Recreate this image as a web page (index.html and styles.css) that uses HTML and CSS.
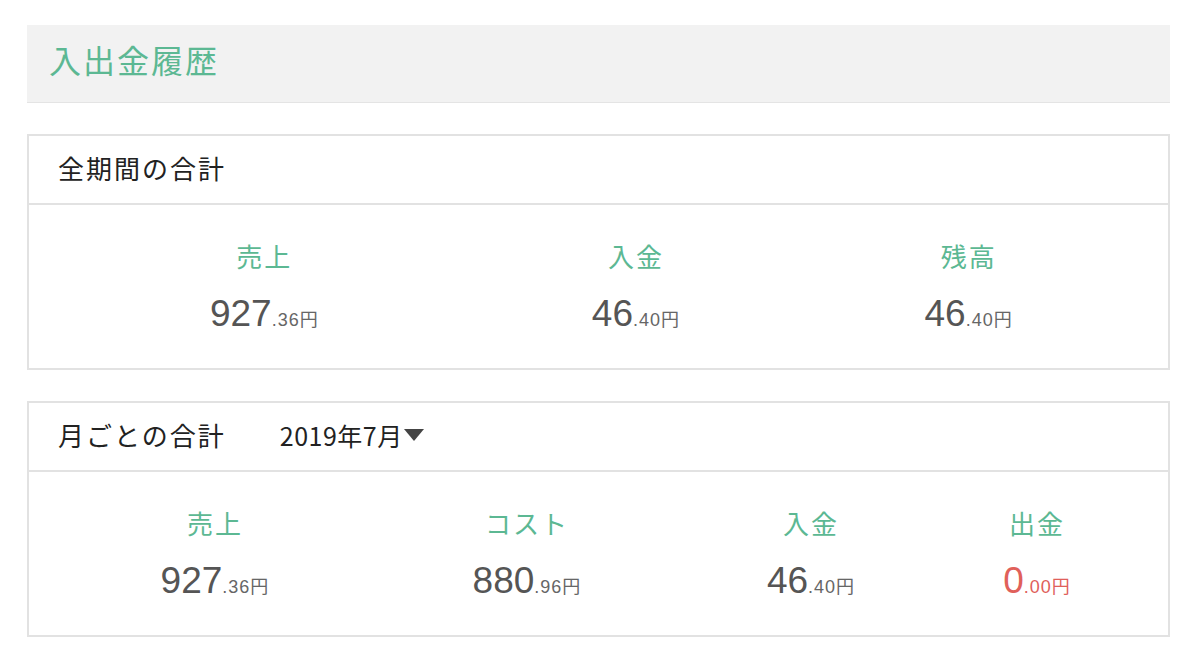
FILE: index.html
```html
<!DOCTYPE html>
<html lang="ja">
<head>
<meta charset="utf-8">
<title>入出金履歴</title>
<link rel="stylesheet" href="styles.css">
</head>
<body>
<div class="page">

    <div class="page-head">
        <h1 class="page-title">入出金履歴</h1>
    </div>

    <section class="card">
        <div class="card-head">
            <h2 class="card-title">全期間の合計</h2>
        </div>
        <div class="card-body cols-3">
            <div class="stat">
                <div class="stat-label">売上</div>
                <div class="stat-value">927<span class="stat-dec">.36円</span></div>
            </div>
            <div class="stat">
                <div class="stat-label">入金</div>
                <div class="stat-value">46<span class="stat-dec">.40円</span></div>
            </div>
            <div class="stat">
                <div class="stat-label">残高</div>
                <div class="stat-value">46<span class="stat-dec">.40円</span></div>
            </div>
        </div>
    </section>

    <section class="card">
        <div class="card-head">
            <h2 class="card-title">月ごとの合計</h2>
            <div class="month-select">
                <span>2019年7月</span>
                <svg class="caret" viewBox="0 0 20 12" width="20" height="12"><polygon points="0,0 20,0 10,12" fill="currentColor"/></svg>
            </div>
        </div>
        <div class="card-body cols-4">
            <div class="stat">
                <div class="stat-label">売上</div>
                <div class="stat-value">927<span class="stat-dec">.36円</span></div>
            </div>
            <div class="stat">
                <div class="stat-label">コスト</div>
                <div class="stat-value">880<span class="stat-dec">.96円</span></div>
            </div>
            <div class="stat">
                <div class="stat-label">入金</div>
                <div class="stat-value">46<span class="stat-dec">.40円</span></div>
            </div>
            <div class="stat">
                <div class="stat-label">出金</div>
                <div class="stat-value negative">0<span class="stat-dec">.00円</span></div>
            </div>
        </div>
    </section>

</div>
</body>
</html>
```

FILE: styles.css
```css
html {
    background: #fff;
}

body {
    margin: 0;
    font-family: "Liberation Sans", "Noto Sans CJK JP", sans-serif;
    color: #222;
}

.page {
    margin: 25px 30px 0 27px;
    display: flex;
    flex-direction: column;
    gap: 31px;
}

.page-head {
    height: 78px;
    background: #f2f2f2;
    border-bottom: 1px solid #e4e4e4;
    box-sizing: border-box;
    padding: 0 0 10px 22px;
    display: flex;
    align-items: center;
}

.page-title {
    margin: 0;
    font-size: 32px;
    font-weight: 400;
    letter-spacing: 2px;
    color: #5cb893;
}

.card {
    border: 2px solid #e2e2e2;
}

.card-head {
    height: 69px;
    box-sizing: border-box;
    border-bottom: 2px solid #e2e2e2;
    padding: 0 0 4px 29px;
    display: flex;
    align-items: center;
    gap: 54px;
}

.card-title {
    margin: 0;
    font-size: 26px;
    font-weight: 400;
    letter-spacing: 2px;
    color: #222;
}

.month-select {
    display: flex;
    align-items: center;
    gap: 1px;
    font-family: "Liberation Sans Narrow", "Noto Sans CJK JP", sans-serif;
    font-size: 25px;
    letter-spacing: 0.5px;
    color: #222;
}
.month-select .caret {
    color: #444;
    margin-top: 1px;
}

.card-body {
    display: grid;
    padding: 35px 33px 32px 30px;
}
.cols-3 {
    grid-template-columns: 411fr 333fr 333fr;
}
.cols-4 {
    grid-template-columns: 312fr 312fr 256fr 196fr;
}

.stat {
    text-align: center;
}

.stat-label {
    font-size: 26px;
    line-height: 36px;
    letter-spacing: 2px;
    color: #5cb893;
}

.stat-value {
    margin-top: 16px;
    font-size: 37px;
    line-height: 44px;
    color: #555;
}

.stat-dec {
    font-size: 18px;
    line-height: 20px;
    letter-spacing: 1px;
    color: #666;
}

.stat-value.negative,
.stat-value.negative .stat-dec {
    color: #e0605a;
}
```
